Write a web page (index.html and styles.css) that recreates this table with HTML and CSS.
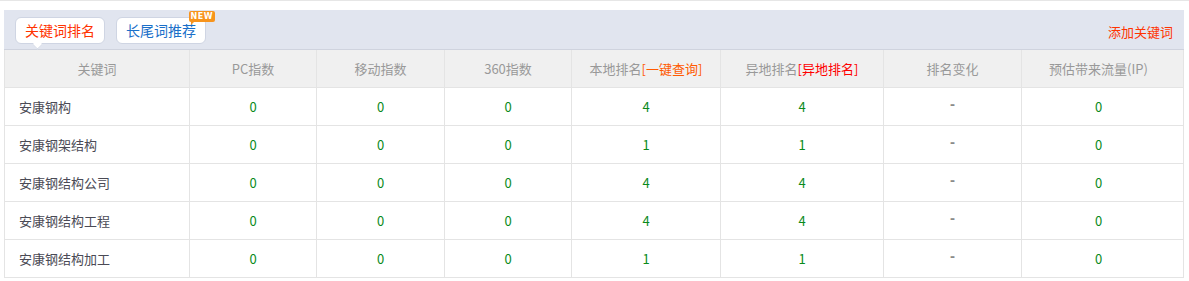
FILE: index.html
```html
<!DOCTYPE html>
<html lang="zh-CN">
<head>
<meta charset="utf-8">
<link rel="stylesheet" href="styles.css">
</head>
<body>
<div class="topline"></div>
<div class="panel">
  <div class="bar">
    <div class="tabs">
      <span class="tab active">关键词排名</span>
      <span class="tab blue">长尾词推荐<span class="badge">NEW</span></span>
    </div>
    <a class="add">添加关键词</a>
  </div>
  <table class="grid">
    <colgroup>
      <col style="width:185px"><col style="width:127px"><col style="width:128px"><col style="width:127px"><col style="width:149px"><col style="width:163px"><col style="width:138px"><col style="width:162px">
    </colgroup>
    <thead>
      <tr>
        <th>关键词</th><th>PC指数</th><th>移动指数</th><th>360指数</th>
        <th>本地排名<span class="org">[一键查询]</span></th>
        <th>异地排名<span class="red">[异地排名]</span></th>
        <th>排名变化</th><th class="last">预估带来流量(IP)</th>
      </tr>
    </thead>
    <tbody>
      <tr><td class="kw">安康钢构</td><td>0</td><td>0</td><td>0</td><td>4</td><td>4</td><td><span class="dash">-</span></td><td class="last">0</td></tr>
      <tr><td class="kw">安康钢架结构</td><td>0</td><td>0</td><td>0</td><td>1</td><td>1</td><td><span class="dash">-</span></td><td class="last">0</td></tr>
      <tr><td class="kw">安康钢结构公司</td><td>0</td><td>0</td><td>0</td><td>4</td><td>4</td><td><span class="dash">-</span></td><td class="last">0</td></tr>
      <tr><td class="kw">安康钢结构工程</td><td>0</td><td>0</td><td>0</td><td>4</td><td>4</td><td><span class="dash">-</span></td><td class="last">0</td></tr>
      <tr><td class="kw">安康钢结构加工</td><td>0</td><td>0</td><td>0</td><td>1</td><td>1</td><td><span class="dash">-</span></td><td class="last">0</td></tr>
    </tbody>
  </table>
</div>
</body>
</html>
```
FILE: styles.css
```css
html, body { margin: 0; padding: 0; background: #fff; }
body {
  font-family: "Microsoft YaHei", "Noto Sans CJK SC", "Liberation Sans", sans-serif;
  font-size: 13px;
  color: #333;
}
.topline { height: 1px; background: #e6e6e6; margin-bottom: 9px; }
.panel { margin: 0 5px 0 4px; }
.bar {
  height: 39px;
  background: #e1e5ef;
  border-bottom: 1px solid #cfd3de;
  display: flex;
  align-items: center;
  justify-content: space-between;
  padding: 0 11px 0 11px;
}
.tabs { display: flex; gap: 11px; padding-top: 1px; }
.tab {
  position: relative;
  display: inline-block;
  height: 25px;
  line-height: 25px;
  padding: 0 9px;
  background: #fff;
  border: 1px solid #cfd5e3;
  border-radius: 6px;
  color: #1a6fc9;
  font-size: 14px;
}
.tab.active { color: #ff3300; }
.tab.active::after {
  content: "";
  position: absolute;
  left: 17px;
  bottom: -6px;
  width: 8px;
  height: 8px;
  background: #fff;
  border-right: 1px solid #cfd5e3;
  border-bottom: 1px solid #cfd5e3;
  transform: rotate(45deg) scale(0.8);
}
.badge {
  position: absolute;
  right: -10px;
  top: -7px;
  height: 11px;
  line-height: 11px;
  padding: 0 2px;
  background: #f7941d;
  color: #fff;
  font-family: "DejaVu Sans", sans-serif;
  font-size: 8px;
  font-weight: bold;
  border-radius: 2px;
  letter-spacing: 0.5px;
}
.badge::after {
  content: "";
  position: absolute;
  left: 2px;
  bottom: -3px;
  border-left: 3px solid #f7941d;
  border-bottom: 3px solid transparent;
}
.add { color: #ff3300; cursor: pointer; padding-top: 3px; }
.grid {
  width: 1180px;
  border-collapse: collapse;
  table-layout: fixed;
}
.grid th, .grid td {
  height: 37px;
  padding: 0;
  border: 1px solid #e4e4e4;
  text-align: center;
  font-weight: normal;
}
.grid th { background: #f0f0f0; color: #999; border-top: none; }
.grid td { color: #0a8a1a; }
.grid .last { padding-right: 8px; }
.grid td.kw { text-align: left; padding-left: 14px; color: #4a4a55; }
.dash {
  display: inline-block;
  font-family: "Liberation Sans", sans-serif;
  font-size: 15px;
  font-weight: bold;
  color: #8a8a8a;
  line-height: 15px;
  vertical-align: 5px;
}
.org { color: #ff5a00; }
.red { color: #ff0000; }
```
